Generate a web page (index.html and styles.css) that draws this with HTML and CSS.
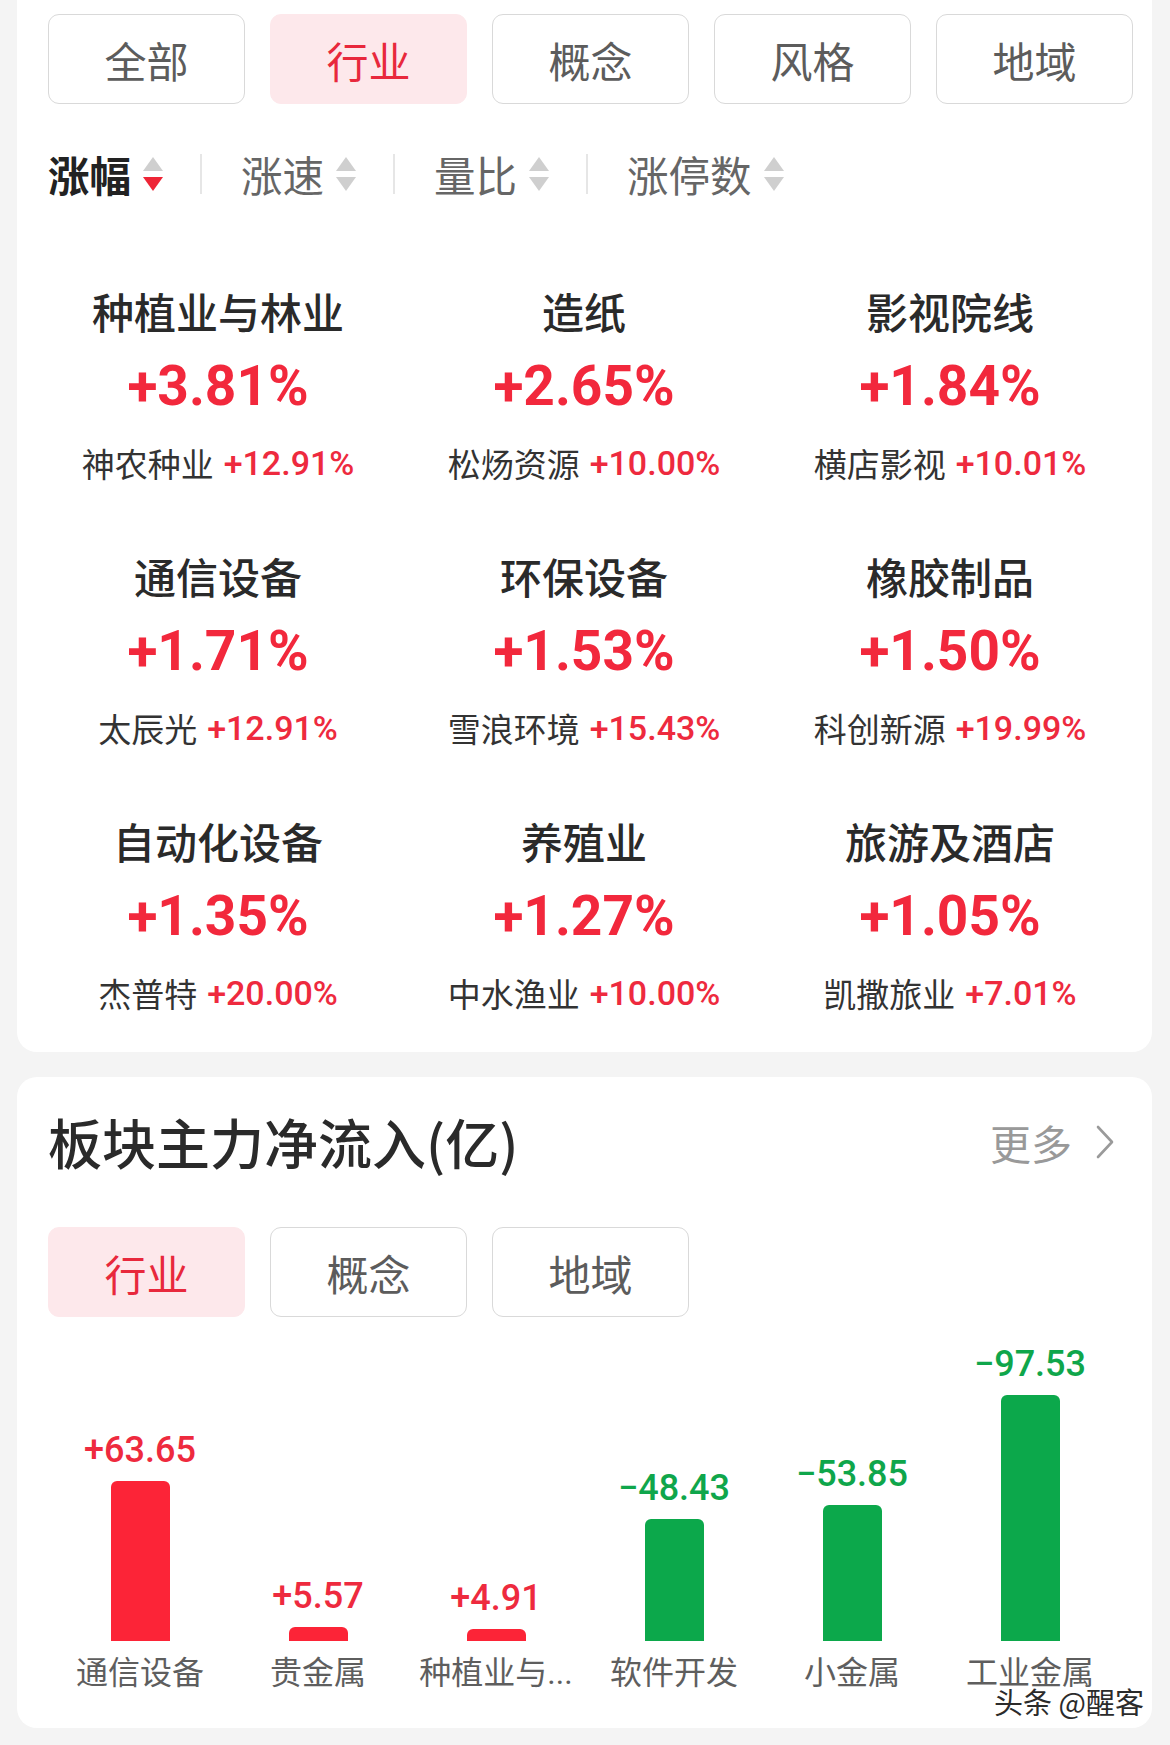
FILE: index.html
```html
<!DOCTYPE html>
<html lang="zh-CN">
<head>
<meta charset="utf-8">
<title>板块</title>
<link rel="stylesheet" href="styles.css">
</head>
<body>
<div class="page">
  <section class="card card-top">
    <div class="tabs">
      <div class="tab">全部</div>
      <div class="tab active">行业</div>
      <div class="tab">概念</div>
      <div class="tab">风格</div>
      <div class="tab">地域</div>
    </div>

    <div class="sorts">
      <div class="sort on">
        <span class="sort-label">涨幅</span>
        <svg class="sort-arrow" viewBox="0 0 22 36" width="22" height="36"><path d="M11 1 L21 15 L1 15 Z" fill="#cfcfcf"/><path d="M1 21 L21 21 L11 35 Z" fill="#ee2536"/></svg>
      </div>
      <span class="divider"></span>
      <div class="sort">
        <span class="sort-label">涨速</span>
        <svg class="sort-arrow" viewBox="0 0 22 36" width="22" height="36"><path d="M11 1 L21 15 L1 15 Z" fill="#cfcfcf"/><path d="M1 21 L21 21 L11 35 Z" fill="#cfcfcf"/></svg>
      </div>
      <span class="divider"></span>
      <div class="sort">
        <span class="sort-label">量比</span>
        <svg class="sort-arrow" viewBox="0 0 22 36" width="22" height="36"><path d="M11 1 L21 15 L1 15 Z" fill="#cfcfcf"/><path d="M1 21 L21 21 L11 35 Z" fill="#cfcfcf"/></svg>
      </div>
      <span class="divider"></span>
      <div class="sort">
        <span class="sort-label">涨停数</span>
        <svg class="sort-arrow" viewBox="0 0 22 36" width="22" height="36"><path d="M11 1 L21 15 L1 15 Z" fill="#cfcfcf"/><path d="M1 21 L21 21 L11 35 Z" fill="#cfcfcf"/></svg>
      </div>
    </div>

    <div class="grid">
      <div class="item"><div class="name">种植业与林业</div><div class="pct">+3.81%</div><div class="sub"><span class="stock">神农种业</span><span class="up">+12.91%</span></div></div>
      <div class="item"><div class="name">造纸</div><div class="pct">+2.65%</div><div class="sub"><span class="stock">松炀资源</span><span class="up">+10.00%</span></div></div>
      <div class="item"><div class="name">影视院线</div><div class="pct">+1.84%</div><div class="sub"><span class="stock">横店影视</span><span class="up">+10.01%</span></div></div>
      <div class="item"><div class="name">通信设备</div><div class="pct">+1.71%</div><div class="sub"><span class="stock">太辰光</span><span class="up">+12.91%</span></div></div>
      <div class="item"><div class="name">环保设备</div><div class="pct">+1.53%</div><div class="sub"><span class="stock">雪浪环境</span><span class="up">+15.43%</span></div></div>
      <div class="item"><div class="name">橡胶制品</div><div class="pct">+1.50%</div><div class="sub"><span class="stock">科创新源</span><span class="up">+19.99%</span></div></div>
      <div class="item"><div class="name">自动化设备</div><div class="pct">+1.35%</div><div class="sub"><span class="stock">杰普特</span><span class="up">+20.00%</span></div></div>
      <div class="item"><div class="name">养殖业</div><div class="pct">+1.27%</div><div class="sub"><span class="stock">中水渔业</span><span class="up">+10.00%</span></div></div>
      <div class="item"><div class="name">旅游及酒店</div><div class="pct">+1.05%</div><div class="sub"><span class="stock">凯撒旅业</span><span class="up">+7.01%</span></div></div>
    </div>
  </section>

  <section class="card card-flow">
    <div class="flow-head">
      <h2 class="flow-title">板块主力净流入(亿)</h2>
      <div class="more">更多<svg class="chev" viewBox="0 0 20 36" width="20" height="36"><path d="M3 3 L17 18 L3 33" fill="none" stroke="#9a9a9a" stroke-width="2.6" stroke-linecap="round" stroke-linejoin="round"/></svg></div>
    </div>
    <div class="tabs">
      <div class="tab active">行业</div>
      <div class="tab">概念</div>
      <div class="tab">地域</div>
    </div>
    <div class="chart">
      <div class="col"><div class="val up">+63.65</div><div class="bar red" style="height:160px"></div><div class="label">通信设备</div></div>
      <div class="col"><div class="val up">+5.57</div><div class="bar red" style="height:14px"></div><div class="label">贵金属</div></div>
      <div class="col"><div class="val up">+4.91</div><div class="bar red" style="height:12px"></div><div class="label">种植业与...</div></div>
      <div class="col"><div class="val down">−48.43</div><div class="bar green" style="height:122px"></div><div class="label">软件开发</div></div>
      <div class="col"><div class="val down">−53.85</div><div class="bar green" style="height:136px"></div><div class="label">小金属</div></div>
      <div class="col"><div class="val down">−97.53</div><div class="bar green" style="height:246px"></div><div class="label">工业金属</div></div>
    </div>
    <div class="watermark">头条 @醒客</div>
  </section>
</div>
</body>
</html>
```

FILE: styles.css
```css
* { box-sizing: border-box; }

html, body {
  margin: 0;
  padding: 0;
  background: #f4f4f4;
}

body {
  font-family: Roboto, "Noto Sans CJK SC", "Noto Sans", sans-serif;
  color: #333;
}

.page {
  width: 1170px;
  padding: 0 18px 0 17px;
}

.card {
  background: #fff;
  border-radius: 20px;
  padding: 0 19px 0 18px;
}

.card-top {
  border-radius: 0 0 20px 20px;
  padding-top: 14px;
  padding-bottom: 36px;
}

.card-flow {
  position: relative;
  margin-top: 25px;
  padding-top: 33px;
  padding-bottom: 35px;
}

/* tabs */
.tabs {
  display: flex;
  gap: 25px;
  margin-left: 13px;
}

.tab {
  width: 197px;
  height: 90px;
  border: 1.5px solid #d9d9d9;
  border-radius: 11px;
  display: flex;
  align-items: center;
  justify-content: center;
  font-family: "Noto Sans CJK SC", sans-serif;
  font-size: 42px;
  color: #5c5c5c;
}

.tab.active {
  background: #fde8eb;
  border-color: #fde8eb;
  color: #e8283c;
}

/* sort row */
.sorts {
  display: flex;
  align-items: center;
  height: 60px;
  margin-top: 40px;
  margin-left: 13px;
}

.sort {
  display: flex;
  align-items: center;
}

.sort-label {
  font-family: "Noto Sans CJK SC", sans-serif;
  font-size: 41.5px;
  line-height: 60px;
  color: #666;
}

.sort.on .sort-label {
  color: #222;
  font-weight: 700;
}

.sort-arrow {
  margin-left: 11px;
  display: block;
}

.divider {
  width: 2px;
  height: 40px;
  background: #e6e6e6;
  margin: 0 39px 0 36px;
}

/* grid */
.grid {
  display: grid;
  grid-template-columns: repeat(3, 366px);
  row-gap: 65px;
  margin-top: 82px;
}

.item {
  display: flex;
  flex-direction: column;
  align-items: center;
}

.name {
  font-family: "Noto Sans CJK SC", sans-serif;
  font-size: 42px;
  font-weight: 500;
  line-height: 50px;
  height: 50px;
  color: #2a2a2a;
}

.pct {
  margin-top: 15px;
  font-family: Roboto, sans-serif;
  font-size: 55px;
  font-weight: 700;
  line-height: 70px;
  height: 70px;
  color: #f2283c;
}

.sub {
  margin-top: 19px;
  height: 46px;
  display: flex;
  align-items: center;
  gap: 10px;
  white-space: nowrap;
}

.stock {
  font-family: "Noto Sans CJK SC", sans-serif;
  font-size: 33px;
  line-height: 46px;
  color: #333;
}

.sub .up {
  font-size: 34px;
  line-height: 46px;
}

.up {
  color: #ee2a3e;
  font-family: Roboto, sans-serif;
  font-weight: 500;
}

.down {
  color: #0fa64b;
  font-family: Roboto, sans-serif;
  font-weight: 500;
}

/* flow card */
.flow-head {
  display: flex;
  align-items: center;
  justify-content: space-between;
  height: 64px;
  margin-left: 13px;
  padding-right: 18px;
}

.flow-title {
  margin: 0;
  font-family: "Noto Sans CJK SC", sans-serif;
  font-size: 54px;
  font-weight: 500;
  line-height: 64px;
  color: #2a2a2a;
}

.more {
  display: flex;
  align-items: center;
  font-family: "Noto Sans CJK SC", sans-serif;
  font-size: 41px;
  color: #999;
}

.chev {
  margin-left: 23px;
  display: block;
}

.card-flow .tabs {
  margin-top: 53px;
}

.chart {
  display: grid;
  grid-template-columns: repeat(6, 178px);
  align-items: end;
  margin-top: 27px;
  margin-left: 16px;
}

.col {
  display: flex;
  flex-direction: column;
  align-items: center;
}

.val {
  font-size: 36px;
  line-height: 40px;
  height: 40px;
  margin-bottom: 11px;
}

.bar {
  width: 59px;
  border-radius: 6px 6px 0 0;
}

.bar.red { background: #fc2437; }
.bar.green { background: #0ca84b; }

.label {
  margin-top: 12px;
  font-family: Roboto, "Noto Sans CJK SC", sans-serif;
  font-size: 32px;
  line-height: 40px;
  height: 40px;
  color: #5e5e5e;
  white-space: nowrap;
}

.watermark {
  position: absolute;
  right: 8px;
  bottom: 10px;
  font-family: "Noto Sans CJK SC", sans-serif;
  font-size: 29px;
  line-height: 34px;
  color: #2b2b2b;
  text-shadow: 1px 1px 0 #fff, -1px -1px 0 #fff, 1px -1px 0 #fff, -1px 1px 0 #fff;
}
```
